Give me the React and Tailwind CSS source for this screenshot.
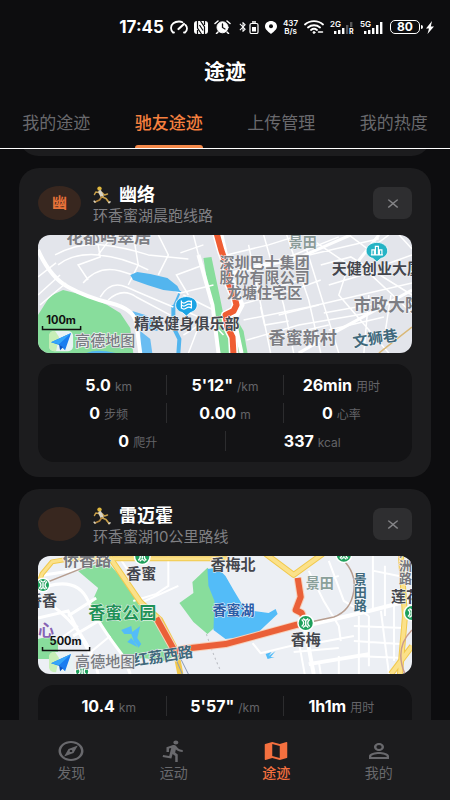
import { useState } from 'react';
import {
  MdOutlineExplore, MdDirectionsRun, MdMap, MdPersonOutline, MdClose,
  MdBluetooth,
} from 'react-icons/md';

const tabs = ['我的途迹', '驰友途迹', '上传管理', '我的热度'];

const navItems = [
  { label: '发现', icon: MdOutlineExplore },
  { label: '运动', icon: MdDirectionsRun },
  { label: '途迹', icon: MdMap },
  { label: '我的', icon: MdPersonOutline },
];

const initialTracks = [
  {
    id: 1,
    avatar: '幽',
    name: '幽络',
    route: '环香蜜湖晨跑线路',
    map: ParkMap,
    stats: [
      [['5.0', 'km'], ['5\'12"', '/km'], ['26min', '用时']],
      [['0', '步频'], ['0.00', 'm'], ['0', '心率']],
      [['0', '爬升'], ['337', 'kcal']],
    ],
  },
  {
    id: 2,
    avatar: '',
    name: '雷迈霍',
    route: '环香蜜湖10公里路线',
    map: LakeMap,
    stats: [
      [['10.4', 'km'], ['5\'57"', '/km'], ['1h1m', '用时']],
      [['0', '步频'], ['0.00', 'm'], ['0', '心率']],
      [['0', '爬升'], ['702', 'kcal']],
    ],
  },
];

const bars = [
  { x: 4, h: 3 },
  { x: 8, h: 4 },
  { x: 12, h: 6 },
  { x: 16, h: 9 },
  { x: 20, h: 12 },
];

function SignalBars({ label, active, roaming }) {
  return (
    <svg viewBox="0 0 24 14" className="h-3.5 w-6 overflow-visible" fill="currentColor">
      <text x="0" y="7" fontSize="8" fontWeight="600">{label}</text>
      {bars.map((bar, i) => (
        <rect key={bar.x} x={bar.x} y={14 - bar.h} width="2.4" height={bar.h} opacity={i < active ? 1 : 0.3} />
      ))}
      {roaming && <rect x="18.5" y="7" width="6" height="7" fill="#0d0d0f" />}
      {roaming && <text x="19" y="14" fontSize="7" fontWeight="700">R</text>}
    </svg>
  );
}

function StatusBar() {
  return (
    <div className="flex h-[54px] shrink-0 items-center justify-end gap-1.5 pr-4 text-white">
      <span className="text-[17px] leading-5 font-bold">17:45</span>
      <svg viewBox="0 0 18 14" className="h-3.5 w-[18px]" fill="none" stroke="#fff" strokeWidth="1.800" strokeLinecap="round">
        <path d="M4 12.500H3Q1 10.500 1 8C1 4 4.500 1.500 9 1.500q2 0 3.500.7M15.500 5Q17 6.500 17 8.500q0 2.500-2 4h-1" />
        <path d="M8.500 9L14 4" strokeWidth="2.200" />
      </svg>
      <svg viewBox="0 0 14 13" className="h-[13px] w-3.5">
        <rect width="14" height="13" rx="3" fill="#fff" />
        <path d="M3.500 0v7l4 6M3.500 9v4M10.500 13V6l-4-6M10.500 4V0M5.500 4l3.500 5.500" fill="none" stroke="#0d0d0f" strokeWidth="1.200" />
      </svg>
      <svg viewBox="0 0 17 14" className="h-3.5 w-[17px]" stroke="#fff" strokeLinecap="round">
        <circle cx="8.5" cy="7.300" r="5.500" fill="#fff" />
        <path d="M1 3.500L4 1M16 3.500L13 1M4 12l-1.500 1.500M13 12l1.500 1.500" strokeWidth="1.500" />
        <path d="M8.500 4v3.500l2.500 1.500" fill="none" stroke="#0d0d0f" strokeWidth="1.300" />
      </svg>
      <span className="flex items-center">
        <MdBluetooth className="h-3.5 w-3" />
        <svg viewBox="0 0 10 13" className="h-[13px] w-2.5" fill="none" stroke="#fff">
          <rect x="1" y="2.500" width="8" height="10" rx="1.500" strokeWidth="1.200" />
          <path d="M3 1h4" strokeWidth="1.500" />
          <rect x="3.500" y="6.500" width="3" height="3.500" fill="#fff" />
        </svg>
      </span>
      <svg viewBox="0 0 12 13" className="h-[13px] w-3">
        <path d="M6 13C3 10.500 0 8.500 0 5.300 0 2.300 2.600 0 6 0s6 2.300 6 5.300C12 8.500 9 10.500 6 13z" fill="#fff" />
        <circle cx="6" cy="5.300" r="2" fill="#0d0d0f" />
      </svg>
      <span className="flex flex-col items-center text-[8px] leading-2 font-semibold">
        <span>437</span>
        <span>B/s</span>
      </span>
      <svg viewBox="0 0 20 14" className="h-3.5 w-5" fill="none" stroke="#fff" strokeWidth="1.800" strokeLinecap="round">
        <path d="M1 4.500C6 0 14 0 19 4.500M4 7.500c3.500-3 8.500-3 12 0M7 10c1.800-1.500 4.200-1.500 6 0" />
        <circle cx="10" cy="12.500" r="1" fill="#fff" strokeWidth="0.800" />
        <path d="M14.500 12h4" strokeWidth="1.500" />
      </svg>
      <SignalBars label="2G" active={3} roaming />
      <SignalBars label="5G" active={5} />
      <span className="flex items-center gap-px">
        <span className="flex h-3.5 w-[30px] items-center justify-center rounded-[5px] border border-white text-[12px] leading-3 font-bold">80</span>
        <span className="h-1 w-0.5 rounded-r bg-white" />
        <svg viewBox="0 0 8 13" className="ml-0.5 h-[13px] w-2">
          <path d="M6 0L0 7.500h3L1.500 13 8 5.500H4.800z" fill="#fff" />
        </svg>
      </span>
    </div>
  );
}

function Runner() {
  return (
    <svg viewBox="0 0 18 18" className="h-[18px] w-[18px]" fill="none" strokeLinecap="round" strokeLinejoin="round">
      <circle cx="6.500" cy="2.600" r="2.200" fill="#e0b83f" />
      <path d="M6 6.500L2.800 6 1.500 8.500M9 6.500l2.500 2.500 3-1" stroke="#c9a04a" strokeWidth="1.500" />
      <path d="M7 6l2 4" stroke="#d9d4c5" strokeWidth="3.600" />
      <path d="M8.500 11l-2 3-4.500 2" stroke="#b3863d" strokeWidth="1.700" />
      <path d="M9.500 11l3.500 1.500 3 4" stroke="#c9a04a" strokeWidth="1.700" />
      <path d="M2 16l-.8-.8M16 16.500l1-.6" stroke="#d9d4c5" strokeWidth="1.600" />
    </svg>
  );
}

function MapBrand({ scale, width }) {
  return (
    <g>
      <text x={4 + width / 2} y="89" textAnchor="middle" fontSize="11" fontWeight="700" fill="#111">{scale}</text>
      <path d={`M4.500 91v3.500h${width}V91`} fill="none" stroke="#111" strokeWidth="1.500" />
      <rect x="11" y="96" width="24" height="20" rx="5" fill="#e9f3f4" />
      <path d="M11 101q0-5 6-5l4 6-3 14q-7 0-7-5z" fill="#b8ec9c" opacity="0.7" />
      <path d="M13 107L33 98l-6 17-5-5z" fill="#1b7df0" />
      <path d="M13 107L33 98 21 109z" fill="#34a5fa" />
      <path d="M21 109l1 6 3-3z" fill="#0b55c4" />
      <text x="37" y="111" fontSize="15" fontWeight="500" fill="#797c82" stroke="#eceef1" strokeWidth="1.500" paintOrder="stroke">高德地图</text>
    </g>
  );
}

function Station({ x, y, r = 7 }) {
  return (
    <g transform={`translate(${x} ${y})`}>
      <circle r={r + 1.500} fill="#fff" />
      <circle r={r} fill="#1fa05c" />
      <path d="M-4-3.500Q0 0-4 3.500M4-3.500Q0 0 4 3.500M-2.500-4.500Q0-1 2.500-4.500M-2.500 4.500Q0 1 2.500 4.500M0-2V2" fill="none" stroke="#fff" strokeWidth="1.400" />
    </g>
  );
}

const mapClass = 'mt-[9px] block h-[118px] w-full rounded-xl';
const halo = { stroke: '#f5f6f8', strokeWidth: 1, paintOrder: 'stroke', fontWeight: 700 };

function ParkMap() {
  return (
    <svg viewBox="0 0 373 118" preserveAspectRatio="xMidYMid slice" className={mapClass} role="img" aria-label="环香蜜湖晨跑线路">
      <rect width="373" height="118" fill="#e3e5eb" />
      <path d="M0 80L12 61 25 55 49 61 69 70 82 78 92 93 95 118H0z" fill="#88dd9c" />
      <path d="M165 23l8-1 8 38 4 20 6 15 2 23h-11l-9-43z" fill="#88dd9c" />
      <path d="M198 84l7 12 4 22h-9z" fill="#88dd9c" />
      <path d="M94 76l13 4 14 10-2 6-18-4zM102 96l10 8 2 14h-12z" fill="#6abdf2" />
      <path d="M135 70v22l6 12-1 14" fill="none" stroke="#53b5ee" strokeWidth="4" />
      <path d="M142 56l-7 16" fill="none" stroke="#53b5ee" strokeWidth="2" />
      <path d="M48 118q10-5 30 0z" fill="#53b5ee" />
      <g fill="none" stroke="#fff" strokeWidth="1.500">
        <path d="M17 20Q40 8 62 10T110 20L150 24M20 30Q35 18 60 20T110 35M50 45L40 30 62 22 60 10" />
        <path d="M45 48Q60 30 82 36T142 58L175 50M62 62Q72 45 88 52T135 72M70 65Q84 52 98 62L132 80" />
        <path d="M90 50L100 30 95 0M60 20L75 0M120 40L130 20 120 0M150 60L138 40 165 30M0 60L22 40M2 70L28 48M0 42L18 28" />
        <path d="M145 60L175 75M145 75L178 90M145 100L170 84 185 100M150 118L160 92M155 0L160 20M142 18L165 10" />
        <path d="M188 20L230 10 262 0M190 38L250 22 300 2M200 70L255 55 282 45M205 85L270 72 373 48M208 105L260 90 330 78" />
        <path d="M225 0L245 70 255 118M248 0L270 65 282 118M210 10L232 118M268 15L300 118M282 30L312 22 373 60M290 50L330 38 373 78" />
        <path d="M278 8L310 30 300 60 350 118M262 22L340 4M225 30L262 24M230 55L265 44M285 78L340 68M290 95L345 82M330 60L325 118M352 60L345 105M240 80L280 70M245 100L290 90" />
        <path d="M310 0L330 15 350 0M360 0L373 14M345 30L373 20M222 72L226 90 250 86" />
      </g>
      <path d="M92 40l7-3 13 2 17 4 10 8 3 6-17-2-16-5-14-5z" fill="#53b5ee" />
      <g fill="none" stroke="#fff" strokeLinejoin="round">
        <path d="M0 15Q12 42 30 52T72 68 98 88L102 118" strokeWidth="4" />
        <path d="M183 0L192 40 204 70 196 85 203 118M160 20L174 70 180 118" strokeWidth="4" />
        <path d="M190 40L262 22 312 0M318 28L340 0" strokeWidth="3" />
        <path d="M260 118L300 95 373 55" strokeWidth="3" />
      </g>
      <path d="M340 118Q355 106 373 92" fill="none" stroke="#d9b877" strokeWidth="1.500" />
      <path d="M178-2l5 18 5 14 2 18 6 14 2 8-3 6-8 4 2 12 5 10 1 18" fill="none" stroke="#fff" strokeWidth="9" strokeLinejoin="round" />
      <path d="M178-2l5 18 5 14 2 18 6 14 2 8-3 6-8 4 2 12 5 10 1 18" fill="none" stroke="#ef5d33" strokeWidth="6" strokeLinejoin="round" />
      <g fill="#7d7e84" {...halo}>
        <text x="28" y="8" fontSize="17">花都鸣翠居</text>
        <text x="226" y="33" fontSize="15" textAnchor="middle">深圳巴士集团</text>
        <text x="226" y="48" fontSize="15" textAnchor="middle">股份有限公司</text>
        <text x="226" y="63" fontSize="15" textAnchor="middle">龙塘住宅区</text>
        <text x="315" y="76" fontSize="17">市政大院</text>
        <text x="230" y="109" fontSize="17">香蜜新村</text>
        <text x="250" y="12" fontSize="14" fill="#8b9b98">景田</text>
      </g>
      <text x="96" y="94" fontSize="15" fill="#44464d" {...halo}>精英健身俱乐部</text>
      <text x="293" y="39" fontSize="15" fill="#44464d" {...halo}>天健创业大厦</text>
      <text x="315" y="112" fontSize="15" fill="#40697c" transform="rotate(-9 315 112)" {...halo}>文狮巷</text>
      <g transform="translate(148 70)" fill="none" stroke="#fff">
        <path d="M0 11l-4-3.500C-14 5-13-8 0-8.500 13-8 14 5 4 7.500z" fill="#1ca3e4" strokeWidth="0.800" />
        <path d="M-5-4.500v8M5-4.500v8M-5-3q2.500 2 5 0t5 0M-5 0q2.500 2 5 0t5 0M-5 3q2.500 2 5 0t5 0" strokeWidth="1.200" />
      </g>
      <g transform="translate(338 16)">
        <path d="M0 11l-4-3.500C-14 5-13-8 0-8.500 13-8 14 5 4 7.500z" fill="#25b3c5" stroke="#fff" strokeWidth="0.800" />
        <path d="M-5 4V-1h2.500v5M-1.500 4V-4.500h3V4M2.500 4V-1H5v5M-6 4H6" fill="none" stroke="#fff" strokeWidth="1.200" />
      </g>
      <MapBrand scale="100m" width={38} />
    </svg>
  );
}

function LakeMap() {
  return (
    <svg viewBox="0 0 373 118" preserveAspectRatio="xMidYMid slice" className={mapClass} role="img" aria-label="环香蜜湖10公里路线">
      <rect width="373" height="118" fill="#eceff4" />
      <path d="M40 15L52 11 68 5 80 18 95 40 110 58 122 72 133 94 137 100 125 105 105 102 88 104 80 95 70 80 58 62 52 50 60 32z" fill="#88dd9c" />
      <path d="M0 83q10-4 20 2v18H0z" fill="#88dd9c" />
      <path d="M141 47L155 37 154 26 169 12 180 25 178 70 169 78 155 66z" fill="#88dd9c" />
      <path d="M169 13l10-1 8 8 8 14 12 20 23 3 7-4 2 5-19 18-16 5-17 2-12-9 1-29-6-15z" fill="#53bcf8" />
      <path d="M83 74l10-4 1 6 8-6-3 12 4 6-3 4-4-6-3-8-7 0zM93 82l-4 4 12 6" fill="#53bcf8" />
      <path d="M227 98l6-2-3 4 7-5-5 6 4 0-7 2z" fill="#53bcf8" />
      <g fill="none" stroke="#fff" strokeWidth="2">
        <path d="M10 30Q40 22 50 45T85 100L92 118M0 20L40 14M30 60L58 42M35 80L62 64M12 48Q50 75 60 118M0 62L30 55 52 98" strokeWidth="3" />
        <path d="M50 98L72 80M40 70L20 84M95 45L118 38 130 30V0M80 0L95 22M100 48L140 30" />
        <path d="M270 15L285 45 300 70 302 85M290 5L305 45 330 60M268 30L300 20M272 88L315 80M260 85L266 118M255 96L300 92M280 105L282 118" />
        <path d="M334 0V55M346 10V60M320 60V118M330 60V110M342 55L350 118M355 45V105M315 70L365 72M315 85L362 88M315 100L365 102M360 20L335 15M300 118V100" />
        <path d="M266 70L330 55 373 44M266 70L275 118M270 108L330 98" strokeWidth="4" />
        <path d="M214 87L222 97 260 88" />
      </g>
      <path d="M168 78Q175 100 182 114" fill="none" stroke="#b9bcc2" strokeDasharray="2 3" />
      <path d="M267 67L295 61Q312 55 315 35T300 0M0 30L50 10 72 0" fill="none" stroke="#b79e90" strokeWidth="1.500" />
      <g fill="none" stroke="#f1c94d" strokeLinejoin="round">
        <path d="M-1 32L4 18 14 6 32 3H190" strokeWidth="5" />
        <path d="M72 2L102 46 122 64 137 93 142 118" strokeWidth="6" />
        <path d="M227-2L255 19 284-2M362 0L366 60 361 118M373 90L352 118" strokeWidth="6" />
      </g>
      <g fill="none" stroke="#fbe189" strokeLinejoin="round">
        <path d="M-1 32L4 18 14 6 32 3H190" strokeWidth="3" />
        <path d="M72 2L102 46 122 64M227-2L255 19 284-2M362 0L366 60 361 118M373 90L352 118" strokeWidth="4" />
      </g>
      <path d="M144 118l-6-14 8-14M150 118l-8-16" fill="none" stroke="#8f9db6" />
      <path d="M366 118Q355 92 373 74" fill="none" stroke="#c99c8e" strokeWidth="1.500" />
      <path d="M118 62L137 96 144 93 187 88 257 69 267 67 263 57 257 54 262 41 259 22" fill="none" stroke="#f7d0b9" strokeWidth="8" strokeLinejoin="round" />
      <path d="M118 62L137 96 144 93 187 88 257 69 267 67 263 57 257 54 262 41 259 22" fill="none" stroke="#ea6038" strokeWidth="6" strokeLinejoin="round" />
      <Station x={267} y={67} />
      <Station x={305} y={-1} />
      <Station x={373} y={57} />
      <Station x={5} y={29} r={6} />
      <Station x={104} y={1} />
      <Station x={44} y={115} r={6} />
      <g fill="#44464d" {...halo}>
        <text x="25" y="10" fontSize="16" fill="#76777c">侨香路</text>
        <text x="88" y="23" fontSize="15">香蜜</text>
        <text x="-11" y="50" fontSize="15">侨香</text>
        <text x="172" y="14" fontSize="15">香梅北</text>
        <text x="252" y="89" fontSize="15">香梅</text>
        <text x="352" y="46" fontSize="15">莲花</text>
        <text x="0" y="80" fontSize="16" fill="#8664b4">心</text>
        <text x="50" y="63" fontSize="17" fill="#1f9257">香蜜公园</text>
        <text x="174" y="59" fontSize="14" fill="#2b5da8">香蜜湖</text>
        <text x="267" y="32" fontSize="14" fill="#8aa09a">景田</text>
      </g>
      <g fill="#40697c" {...halo}>
        <text x="315" y="28" fontSize="13">景</text>
        <text x="315" y="41" fontSize="13">田</text>
        <text x="315" y="54" fontSize="13">路</text>
        <text x="96" y="110" fontSize="15" transform="rotate(-9 96 110)">红荔西路</text>
      </g>
      <g fill="#76777c" {...halo}>
        <text x="360" y="1" fontSize="13">八</text>
        <text x="360" y="14" fontSize="13">洲</text>
        <text x="360" y="27" fontSize="13">路</text>
      </g>
      <MapBrand scale="500m" width={47} />
    </svg>
  );
}

function TrackCard({ track, onRemove }) {
  const RouteMap = track.map;
  return (
    <article className="shrink-0 rounded-[20px] bg-[#1c1c1e] px-[19px] pt-4 pb-[15px]">
      <div className="flex items-start">
        <div className="mt-0.5 flex h-[34px] w-[43px] items-center justify-center rounded-[50%] bg-[#38271f] text-[15px] font-bold text-[#e8733a]">
          {track.avatar}
        </div>
        <div className="ml-3 min-w-0 flex-1">
          <h2 className="flex items-center gap-2 text-[18px] leading-[22px] font-bold text-white">
            <Runner />
            {track.name}
          </h2>
          <p className="truncate text-[15px] leading-5 text-[#808084]">{track.route}</p>
        </div>
        <button
          onClick={() => onRemove(track.id)}
          aria-label="移除"
          className="mt-[3px] flex h-8 w-[39px] items-center justify-center rounded-lg bg-[#2e2e30] text-[#858588]"
        >
          <MdClose preserveAspectRatio="none" className="h-[15px] w-[18px]" />
        </button>
      </div>

      <RouteMap />

      <div className="mt-[11px] space-y-2 rounded-2xl bg-[#131315] px-[13px] py-[11px]">
        {track.stats.map((row, i) => (
          <div key={i} className="flex h-5 divide-x divide-[#2c2c2e]">
            {row.map(([value, unit]) => (
              <div key={unit} className="flex flex-1 items-baseline justify-center gap-1 leading-5 whitespace-nowrap">
                <span className="text-[16px] font-bold text-white">{value}</span>
                <span className="text-[12px] text-[#646468]">{unit}</span>
              </div>
            ))}
          </div>
        ))}
      </div>
    </article>
  );
}

export default function App() {
  const [activeTab, setActiveTab] = useState('驰友途迹');
  const [activeNav, setActiveNav] = useState('途迹');
  const [tracks, setTracks] = useState(initialTracks);

  const removeTrack = (id) => {
    setTracks(prev => prev.filter(t => t.id !== id));
  };

  return (
    <div className="flex h-screen flex-col overflow-hidden bg-[#0d0d0f] font-['Inter','Noto_Sans_CJK_SC',sans-serif]">
      <StatusBar />
      <h1 className="h-9 shrink-0 text-center text-[21px] leading-9 font-bold text-white">途迹</h1>

      <div className="grid shrink-0 grid-cols-4 border-b border-white">
        {tabs.map(tab => (
          <button
            key={tab}
            onClick={() => setActiveTab(tab)}
            className={`flex h-[58px] justify-center text-[17px] ${activeTab === tab ? 'font-medium text-[#f5803f]' : 'text-[#69696d]'}`}
          >
            <span className={`relative flex h-full items-center pt-2.5 ${activeTab === tab ? 'after:absolute after:inset-x-0 after:bottom-0 after:h-[3px] after:rounded-t-sm after:bg-[#f5894a]' : ''}`}>
              {tab}
            </span>
          </button>
        ))}
      </div>

      <main className="flex min-h-0 flex-1 flex-col gap-3 overflow-y-auto px-[19px] [scrollbar-width:none]">
        {/* tail of the card scrolled out above */}
        <div className="-mt-8 h-[39px] shrink-0 rounded-[20px] bg-[#1c1c1e]" />
        {tracks.map(track => (
          <TrackCard key={track.id} track={track} onRemove={removeTrack} />
        ))}
      </main>

      <nav className="grid h-20 shrink-0 grid-cols-4 bg-[#1c1c1e] px-5">
        {navItems.map(({ label, icon: Icon }) => (
          <button
            key={label}
            onClick={() => setActiveNav(label)}
            className={`flex flex-col items-center pt-[19px] text-[14px] leading-5 ${activeNav === label ? 'font-medium text-[#f4703f]' : 'text-[#69696d]'}`}
          >
            <Icon preserveAspectRatio="none" className="h-6 w-[30px]" />
            {label}
          </button>
        ))}
      </nav>
    </div>
  );
}
